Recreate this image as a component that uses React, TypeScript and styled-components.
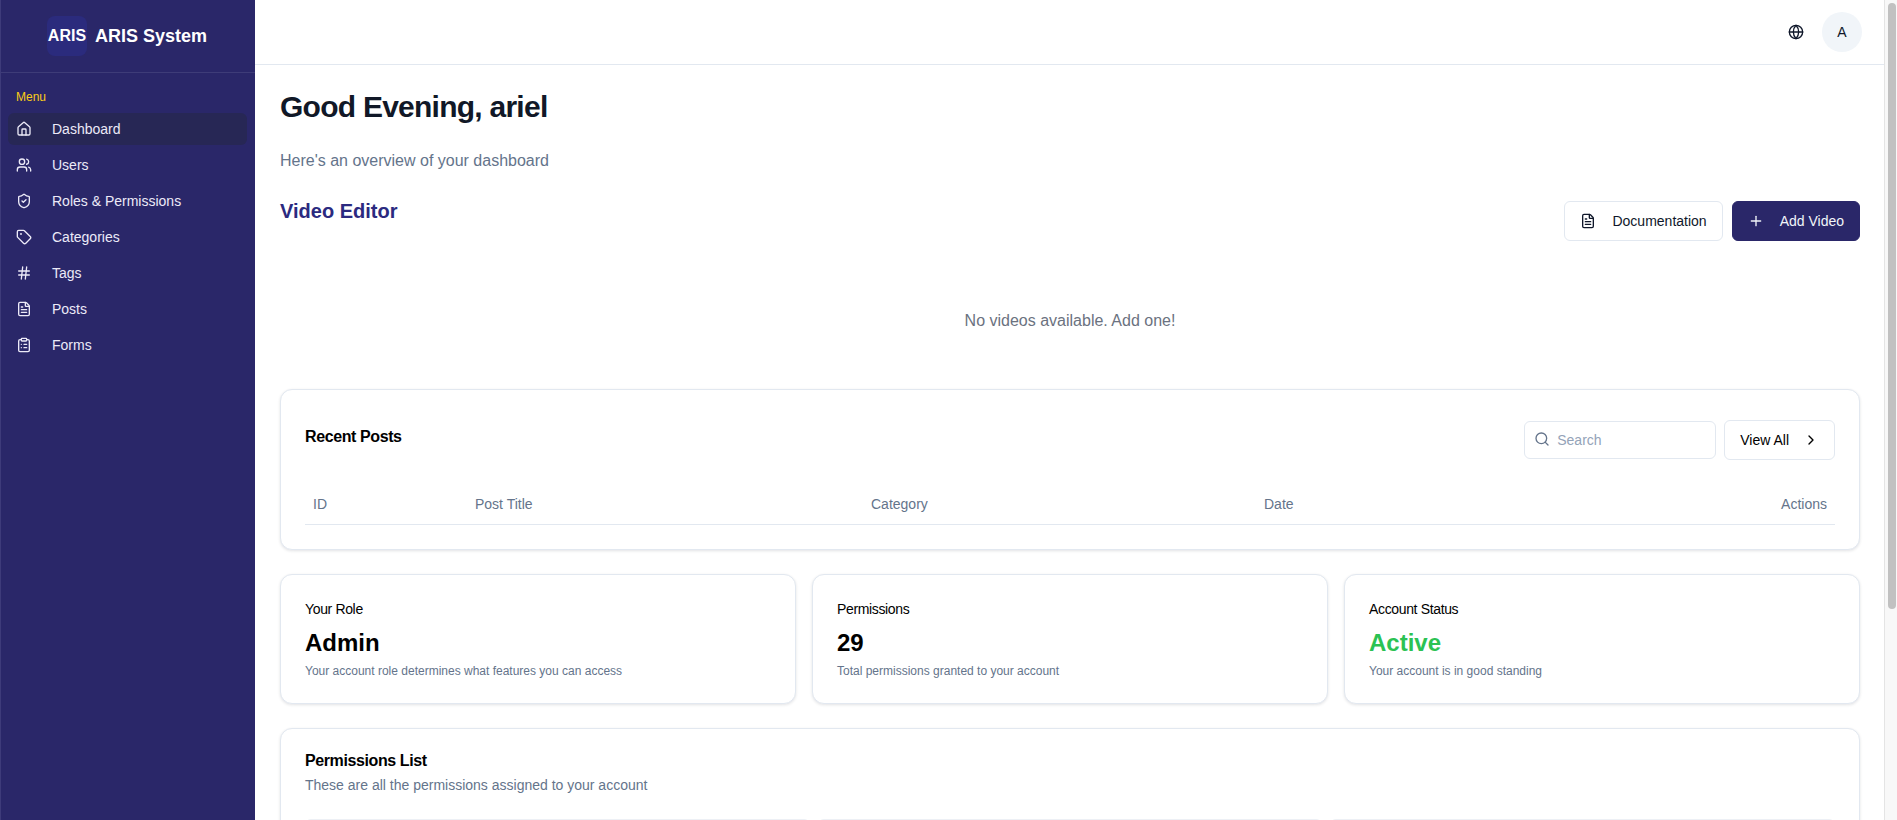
import React from 'react'
import styled, { createGlobalStyle } from 'styled-components'
import {
    ChevronRight,
    ClipboardList,
    FileText,
    Globe,
    Hash,
    Home,
    Plus,
    Search,
    ShieldCheck,
    Tag,
    Users,
} from 'lucide-react'

const GlobalStyle = createGlobalStyle`
    html, body {
        margin: 0;
        padding: 0;
        background: #fff;
        scrollbar-width: none;
    }
    body {
        font-family: "Liberation Sans", Arial, sans-serif;
        color: #0f172a;
    }
    * {
        box-sizing: border-box;
    }
`

const Layout = styled.div`
    display: flex;
    align-items: flex-start;
`

const Sidebar = styled.aside`
    position: sticky;
    top: 0;
    flex: 0 0 255px;
    width: 255px;
    height: 100vh;
    background-color: #2a2769;
    border-left: 1px solid #3e3b7a;
`

const Brand = styled.div`
    display: flex;
    align-items: center;
    justify-content: center;
    gap: 8px;
    height: 73px;
    padding-right: 2px;
    border-bottom: 1px solid #3e3c78;
`

const LogoBox = styled.div`
    width: 40px;
    height: 40px;
    display: flex;
    align-items: center;
    justify-content: center;
    border-radius: 8px;
    background-color: #2b2b7d;
    color: #fff;
    font-size: 16px;
    font-weight: 700;
    white-space: nowrap;
`

const BrandName = styled.span`
    color: #fff;
    font-size: 18px;
    font-weight: 700;
`

const Nav = styled.nav`
    padding: 16px 8px 16px 7px;
`

const MenuLabel = styled.div`
    color: #facc15;
    font-size: 12px;
    line-height: 16px;
    padding-left: 8px;
    margin-bottom: 8px;
`

const NavItem = styled.div<{ $active?: boolean }>`
    display: flex;
    align-items: center;
    gap: 20px;
    height: 32px;
    margin-bottom: 4px;
    padding-left: 8px;
    border-radius: 6px;
    font-size: 14px;
    color: #eceaf8;
    background-color: ${p => (p.$active ? '#272755' : 'transparent')};
`

const Main = styled.main`
    flex: 1;
    min-width: 0;
`

const ScrollRail = styled.div`
    position: sticky;
    top: 0;
    flex: 0 0 13px;
    height: 100vh;
    padding: 3px 1px 0 3px;
    background-color: #f8f8f8;
    border-left: 1px solid #e4e4e4;
`

const ScrollThumb = styled.div`
    height: 606px;
    border-radius: 4px;
    background-color: #c1c1c1;
`

const TopBar = styled.header`
    display: flex;
    align-items: center;
    justify-content: flex-end;
    gap: 18px;
    height: 65px;
    padding-right: 22px;
    border-bottom: 1px solid #e2e8f0;
`

const Avatar = styled.div`
    width: 40px;
    height: 40px;
    border-radius: 50%;
    background-color: #f1f5f9;
    display: flex;
    align-items: center;
    justify-content: center;
    font-size: 14px;
`

const Content = styled.div`
    padding: 24px 24px 24px 25px;
`

const Greeting = styled.h1`
    margin: 0;
    font-size: 30px;
    line-height: 36px;
    font-weight: 700;
    letter-spacing: -0.75px;
    color: #111827;
`

const Overview = styled.p`
    margin: 24px 0 0;
    font-size: 16px;
    line-height: 24px;
    color: #64748b;
`

const EditorHead = styled.div`
    display: flex;
    justify-content: space-between;
    align-items: flex-start;
    margin-top: 24px;
`

const EditorTitle = styled.h2`
    margin: 0;
    font-size: 20px;
    line-height: 28px;
    font-weight: 700;
    color: #2b2a80;
`

const ButtonRow = styled.div`
    display: flex;
    gap: 9px;
    margin-top: 4px;
`

const Button = styled.button<{ $primary?: boolean }>`
    display: flex;
    align-items: center;
    gap: 16px;
    height: 40px;
    padding: 0 15px;
    border-radius: 6px;
    font-family: inherit;
    font-size: 14px;
    border: 1px solid ${p => (p.$primary ? '#2a2769' : '#e2e8f0')};
    background-color: ${p => (p.$primary ? '#2a2769' : '#fff')};
    color: ${p => (p.$primary ? '#f1f5f9' : '#0f172a')};
`

const EmptyNote = styled.p`
    margin: 0;
    padding: 68px 0 56px;
    text-align: center;
    font-size: 16px;
    line-height: 24px;
    color: #6b7280;
`

const Card = styled.section`
    background-color: #fff;
    border: 1px solid #e2e8f0;
    border-radius: 12px;
    box-shadow: 0 1px 3px rgba(15, 23, 42, 0.12);
`

const PostsCard = styled(Card)`
    padding: 30px 24px 24px;
    height: 161px;
`

const PostsHead = styled.div`
    display: flex;
    justify-content: space-between;
    align-items: flex-start;
`

const CardTitle = styled.h3`
    margin: 0;
    font-size: 16px;
    line-height: 24px;
    font-weight: 700;
    letter-spacing: -0.4px;
    color: #000;
`

const PostsTitle = styled(CardTitle)`
    margin-top: 5px;
`

const PostTools = styled.div`
    display: flex;
    align-items: center;
    gap: 8px;
`

const SearchBox = styled.div`
    width: 192px;
    height: 38px;
    display: flex;
    align-items: center;
    gap: 7px;
    padding-left: 9px;
    border: 1px solid #e2e8f0;
    border-radius: 6px;
    font-size: 14px;
    color: #94a3b8;
`

const SearchIcon = styled(Search)`
    margin-top: -3px;
    color: #64748b;
`

const ViewAll = styled(Button)`
    gap: 14px;
    color: #000;
`

const TableHead = styled.div`
    display: grid;
    grid-template-columns: 162px 396px 393px 1fr 120px;
    align-items: center;
    height: 41px;
    margin-top: 24px;
    padding: 0 8px;
    border-bottom: 1px solid #e2e8f0;
    font-size: 14px;
    color: #64748b;
`

const ActionsLabel = styled.span`
    text-align: right;
`

const Stats = styled.div`
    display: grid;
    grid-template-columns: repeat(3, 1fr);
    gap: 16px;
    margin-top: 24px;
`

const StatCard = styled(Card)`
    height: 130px;
    padding: 24px;
`

const StatLabel = styled.div`
    font-size: 14px;
    line-height: 20px;
    letter-spacing: -0.35px;
    color: #000;
`

const StatValue = styled.div<{ $active?: boolean }>`
    margin-top: 8px;
    font-size: 24px;
    line-height: 32px;
    font-weight: 700;
    color: ${p => (p.$active ? '#2bc253' : '#000')};
`

const StatNote = styled.div`
    margin-top: 4px;
    font-size: 12px;
    line-height: 16px;
    color: #64748b;
`

const PermissionsCard = styled(Card)`
    margin-top: 24px;
    padding: 20px 24px 24px;
`

const PermissionsNote = styled.p`
    margin: 2px 0 0;
    font-size: 14px;
    line-height: 20px;
    color: #64748b;
`

const PermissionGrid = styled.div`
    display: grid;
    grid-template-columns: repeat(3, 1fr);
    gap: 8px;
    margin-top: 24px;
`

const PermissionTile = styled.div`
    height: 240px;
    border: 1px solid #edf0f5;
    border-radius: 6px;
`

const menu = [
    { label: 'Dashboard', icon: Home, active: true },
    { label: 'Users', icon: Users },
    { label: 'Roles & Permissions', icon: ShieldCheck },
    { label: 'Categories', icon: Tag },
    { label: 'Tags', icon: Hash },
    { label: 'Posts', icon: FileText },
    { label: 'Forms', icon: ClipboardList },
]

const stats = [
    { label: 'Your Role', value: 'Admin', note: 'Your account role determines what features you can access' },
    { label: 'Permissions', value: '29', note: 'Total permissions granted to your account' },
    { label: 'Account Status', value: 'Active', note: 'Your account is in good standing', active: true },
]

const App = () => {
    return <>
        <GlobalStyle />
        <Layout>
            <Sidebar>
                <Brand>
                    <LogoBox>ARIS</LogoBox>
                    <BrandName>ARIS System</BrandName>
                </Brand>
                <Nav>
                    <MenuLabel>Menu</MenuLabel>
                    {menu.map(({ label, icon: Icon, active }) => (
                        <NavItem key={label} $active={active}>
                            <Icon size={16} />
                            {label}
                        </NavItem>
                    ))}
                </Nav>
            </Sidebar>
            <Main>
                <TopBar>
                    <Globe size={16} />
                    <Avatar>A</Avatar>
                </TopBar>
                <Content>
                    <Greeting>Good Evening, ariel</Greeting>
                    <Overview>Here's an overview of your dashboard</Overview>
                    <EditorHead>
                        <EditorTitle>Video Editor</EditorTitle>
                        <ButtonRow>
                            <Button>
                                <FileText size={16} />
                                Documentation
                            </Button>
                            <Button $primary>
                                <Plus size={16} />
                                Add Video
                            </Button>
                        </ButtonRow>
                    </EditorHead>
                    <EmptyNote>No videos available. Add one!</EmptyNote>
                    <PostsCard>
                        <PostsHead>
                            <PostsTitle>Recent Posts</PostsTitle>
                            <PostTools>
                                <SearchBox>
                                    <SearchIcon size={16} />
                                    Search
                                </SearchBox>
                                <ViewAll>
                                    View All
                                    <ChevronRight size={16} />
                                </ViewAll>
                            </PostTools>
                        </PostsHead>
                        <TableHead>
                            <span>ID</span>
                            <span>Post Title</span>
                            <span>Category</span>
                            <span>Date</span>
                            <ActionsLabel>Actions</ActionsLabel>
                        </TableHead>
                    </PostsCard>
                    <Stats>
                        {stats.map(stat => (
                            <StatCard key={stat.label}>
                                <StatLabel>{stat.label}</StatLabel>
                                <StatValue $active={stat.active}>{stat.value}</StatValue>
                                <StatNote>{stat.note}</StatNote>
                            </StatCard>
                        ))}
                    </Stats>
                    <PermissionsCard>
                        <CardTitle>Permissions List</CardTitle>
                        <PermissionsNote>These are all the permissions assigned to your account</PermissionsNote>
                        <PermissionGrid>
                            <PermissionTile />
                            <PermissionTile />
                            <PermissionTile />
                        </PermissionGrid>
                    </PermissionsCard>
                </Content>
            </Main>
            <ScrollRail>
                <ScrollThumb />
            </ScrollRail>
        </Layout>
    </>
}

export default App
